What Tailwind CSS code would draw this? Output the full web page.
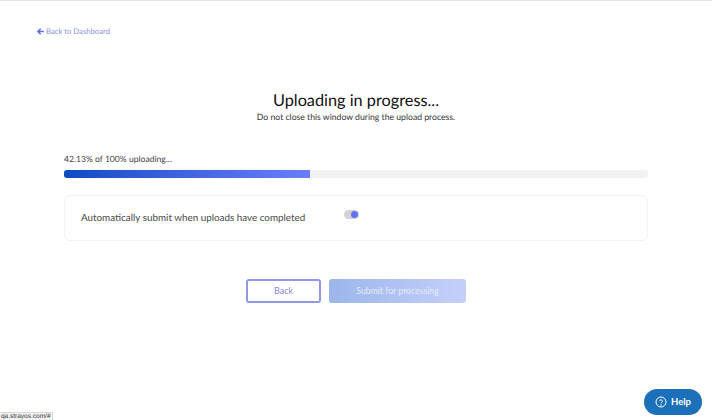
<!DOCTYPE html>
<html lang="en">
<head>
    <meta charset="UTF-8">
    <title>Uploading</title>
    <script src="https://cdn.jsdelivr.net/npm/@tailwindcss/browser@4"></script>
</head>
<body class="bg-white font-['Lato',sans-serif] overflow-hidden [text-rendering:geometricPrecision]">
    <div class="relative w-[712px] h-[420px] border-t border-[#e4e4e4]">
        <!-- Back link -->
        <div class="pl-[37px] pt-[24px] h-[89px]">
            <a href="#" class="flex items-center gap-[2px] text-[7.7px] leading-[13px] text-[#8a90e2]">
                <svg class="w-[7px] h-[7px] text-[#5f6ee6]" viewBox="0 0 10 10" fill="none" stroke="currentColor" stroke-width="2.2"><path d="M9.8 5H1.5M5.2 1L1.2 5L5.2 9"/></svg>
                <span>Back to Dashboard</span>
            </a>
        </div>

        <!-- Heading -->
        <div class="text-center">
            <h1 class="text-[16.3px] leading-[22px] text-[#111]">Uploading in progress...</h1>
            <p class="text-[8.66px] leading-[10px] text-[#333]">Do not close this window during the upload process.</p>
        </div>

        <!-- Progress -->
        <div class="mx-[64px] mt-[31px]">
            <p class="text-[8.6px] leading-[12px] text-[#444]">42.13% of 100% uploading...</p>
            <div class="mt-[5px] h-[8px] rounded-[3px] bg-[#f2f2f2]">
                <div class="h-full rounded-l-[3px] bg-linear-to-r from-[#0a4cc0] to-[#6a7dfb]" style="width: 42.13%"></div>
            </div>

            <div class="mt-[17px] h-[46px] rounded-[6px] border border-[#f3f3f3] flex items-center pl-[16px] relative">
                <span class="text-[9.85px] text-[#4a4a4a] mt-[1px]">Automatically submit when uploads have completed</span>
                <div class="absolute left-[279px] top-[14px] w-[15px] h-[9px] rounded-full bg-[#d2d2d5]">
                    <div class="absolute right-[1px] top-[1px] w-[7px] h-[7px] rounded-full bg-[#6272f0]"></div>
                </div>
            </div>
        </div>

        <!-- Buttons -->
        <div class="flex justify-center gap-[8px] mt-[38px]">
            <button class="w-[75px] h-[24px] rounded-[3px] border-2 border-[#9298e6] bg-white text-[9px] text-[#7f86de]">Back</button>
            <button class="w-[137px] h-[24px] rounded-[3px] bg-linear-to-r from-[#9bb6ea] to-[#c6cffb] text-[8.7px] text-[#e4eafc]">Submit for processing</button>
        </div>

        <!-- Help -->
        <button class="absolute left-[644px] top-[388px] w-[58px] h-[26px] rounded-full bg-[#1b70b9] flex items-center justify-center gap-[4px] text-white text-[9.5px] font-bold">
            <svg class="w-[12px] h-[12px]" viewBox="0 0 24 24" fill="none" stroke="currentColor" stroke-width="2"><circle cx="12" cy="12" r="10"/><path d="M9 9.5a3 3 0 0 1 5.8 1c0 2-2.8 2.4-2.8 4"/><circle cx="12" cy="18" r="0.6"/></svg>
            <span>Help</span>
        </button>

        <!-- Status bar -->
        <div class="absolute left-0 bottom-0 w-[53px] h-[8px] bg-[#f2f2f2] border-t border-r border-[#d8d8d8] pl-[1px] text-[6.5px] leading-[7px] text-[#333] font-['Liberation_Sans',sans-serif]">qa.strayos.com/#</div>
    </div>
</body>
</html>
